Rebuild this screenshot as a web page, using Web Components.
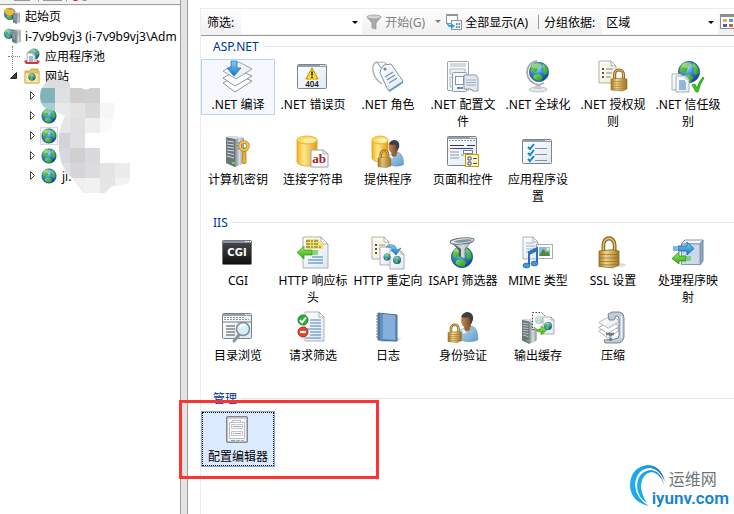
<!DOCTYPE html>
<html lang="zh-CN">
<head>
<meta charset="utf-8">
<title>IIS 管理器</title>
<style>
    body {
        margin: 0;
        background: #fff;
        color: #000;
        font: 12px/17px "Noto Sans", "Noto Sans CJK SC", sans-serif;
    }
</style>
</head>
<body>
<manager-window>
    <connection-tree slot="tree">
        <tree-node level="0" icon="start">起始页</tree-node>
        <tree-node level="0" icon="host">i-7v9b9vj3 (i-7v9b9vj3\Adm</tree-node>
        <tree-node level="1" icon="pools">应用程序池</tree-node>
        <tree-node level="1" icon="folder" state="open">网站</tree-node>
        <tree-node level="2" icon="site" state="closed"></tree-node>
        <tree-node level="2" icon="site" state="closed"></tree-node>
        <tree-node level="2" icon="site" state="closed" current></tree-node>
        <tree-node level="2" icon="site" state="closed"></tree-node>
        <tree-node level="2" icon="site" state="closed">ji.</tree-node>
    </connection-tree>

    <filter-toolbar slot="toolbar"></filter-toolbar>

    <feature-group label="ASP.NET">
        <feature-tile icon="compile" hot>.NET 编译</feature-tile>
        <feature-tile icon="error">.NET 错误页</feature-tile>
        <feature-tile icon="roles">.NET 角色</feature-tile>
        <feature-tile icon="profile">.NET 配置文件</feature-tile>
        <feature-tile icon="global">.NET 全球化</feature-tile>
        <feature-tile icon="rules">.NET 授权规则</feature-tile>
        <feature-tile icon="trust">.NET 信任级别</feature-tile>
        <feature-tile icon="machinekey">计算机密钥</feature-tile>
        <feature-tile icon="connection">连接字符串</feature-tile>
        <feature-tile icon="provider">提供程序</feature-tile>
        <feature-tile icon="controls">页面和控件</feature-tile>
        <feature-tile icon="settings">应用程序设置</feature-tile>
    </feature-group>

    <feature-group label="IIS">
        <feature-tile icon="cgi">CGI</feature-tile>
        <feature-tile icon="headers">HTTP 响应标头</feature-tile>
        <feature-tile icon="redirect">HTTP 重定向</feature-tile>
        <feature-tile icon="isapi">ISAPI 筛选器</feature-tile>
        <feature-tile icon="mime">MIME 类型</feature-tile>
        <feature-tile icon="ssl">SSL 设置</feature-tile>
        <feature-tile icon="handlers">处理程序映射</feature-tile>
        <feature-tile icon="browse">目录浏览</feature-tile>
        <feature-tile icon="filtering">请求筛选</feature-tile>
        <feature-tile icon="log">日志</feature-tile>
        <feature-tile icon="auth">身份验证</feature-tile>
        <feature-tile icon="cache">输出缓存</feature-tile>
        <feature-tile icon="compress">压缩</feature-tile>
    </feature-group>

    <feature-group label="管理" marked>
        <feature-tile icon="editor" selected>配置编辑器</feature-tile>
    </feature-group>

    <site-badge slot="badge"></site-badge>
</manager-window>

<script>
// Gradients shared by all of the icons
const DEFS = `
<defs>
    <radialGradient id="sea" cx=".4" cy=".3" r=".75"><stop offset="0" stop-color="#a9dcf8"/><stop offset=".45" stop-color="#3a86d4"/><stop offset="1" stop-color="#12358c"/></radialGradient>
    <linearGradient id="land" x2="1" y2="1"><stop offset="0" stop-color="#8be04a"/><stop offset="1" stop-color="#149a2c"/></linearGradient>
    <linearGradient id="gold"><stop offset="0" stop-color="#a87a24"/><stop offset=".35" stop-color="#f0d68a"/><stop offset="1" stop-color="#a27422"/></linearGradient>
    <linearGradient id="drum"><stop offset="0" stop-color="#f3b01c"/><stop offset=".35" stop-color="#ffe88c"/><stop offset="1" stop-color="#e39a12"/></linearGradient>
    <linearGradient id="paper" x2="1" y2="1"><stop offset="0" stop-color="#fff"/><stop offset="1" stop-color="#dfe9f2"/></linearGradient>
    <linearGradient id="cream" x2="1" y2="1"><stop offset="0" stop-color="#fffef4"/><stop offset="1" stop-color="#f3ecc8"/></linearGradient>
    <linearGradient id="steel"><stop offset="0" stop-color="#7f8990"/><stop offset=".5" stop-color="#d6dce0"/><stop offset="1" stop-color="#919aa1"/></linearGradient>
    <linearGradient id="blue" x2="0" y2="1"><stop offset="0" stop-color="#7fd0fa"/><stop offset="1" stop-color="#1676c4"/></linearGradient>
    <linearGradient id="green" x2="0" y2="1"><stop offset="0" stop-color="#9bea5c"/><stop offset="1" stop-color="#37a81c"/></linearGradient>
    <linearGradient id="shirt" x2="1" y2="1"><stop offset="0" stop-color="#b8dcf4"/><stop offset="1" stop-color="#5f9bcb"/></linearGradient>
    <linearGradient id="skin"><stop offset="0" stop-color="#c98b58"/><stop offset="1" stop-color="#6b4226"/></linearGradient>
    <linearGradient id="dark" x2="0" y2="1"><stop offset="0" stop-color="#4c4c4e"/><stop offset="1" stop-color="#0f0f10"/></linearGradient>
</defs>`;

const at = (x, y, s, body) => `<g transform="translate(${x} ${y}) scale(${s})">${body}</g>`;

const globe = (x, y, r) => at(x, y, r / 10, `
    <circle r="9.7" fill="url(#sea)" stroke="#1d4f96" stroke-width=".6"/>
    <path d="M-8 -4 Q-6 -9 -1 -9 L2 -7 L-1 -4 L-2 -1 L-5 1 L-8 0Z" fill="url(#land)"/>
    <path d="M4 -8 Q9 -5 9 1 L6 3 L4 0 L5 -3 L3 -5Z" fill="url(#land)"/>
    <path d="M-5 3 L0 2 L4 5 L2 9 Q-3 9 -6 6Z" fill="url(#land)"/>
    <ellipse cx="-2" cy="-6" rx="5" ry="2.5" fill="#fff" opacity=".3"/>`);

// 16 x 22 padlock
const lock = (x, y, s = 1) => at(x, y, s, `
    <path d="M3.5 11 V5.5 a4.5 4.5 0 0 1 9 0 V11" fill="none" stroke="#8a6318" stroke-width="3"/>
    <path d="M3.5 11 V5.5 a4.5 4.5 0 0 1 9 0 V11" fill="none" stroke="#e2c16c" stroke-width="1.2"/>
    <path d="M0 10 L11 9 L16 10 V20 L11 22 L0 21Z" fill="url(#gold)" stroke="#8f6a20" stroke-width=".6"/>
    <path d="M0 12.5h16M0 15h16M0 17.5h16M1 19.8h14" stroke="#8f6a20" stroke-width=".5"/>`);

const page = (x, y, w, h, fill = 'paper', fold = 5) => `
    <path d="M${x} ${y} h${w - fold} l${fold} ${fold} v${h - fold} h${-w}Z" fill="url(#${fill})" stroke="#a3a8ad" stroke-width=".9"/>
    <path d="M${x + w - fold} ${y} v${fold} h${fold}Z" fill="#fff" stroke="#9a9fa5" stroke-width=".8"/>`;

const frame = (x, y, w, h) => `
    <rect x="${x + .5}" y="${y + .5}" width="${w - 1}" height="${h - 1}" rx="1" fill="url(#paper)" stroke="#7b848c"/>
    <path d="M${x + 1} ${y + 2} h${w - 2}" stroke="#93a0ae" stroke-width="2"/>
    <path d="M${x + w - 7} ${y + 1.5} h1.5 m.8 0 h1.5 m.8 0 h1.5" stroke="#fff"/>`;

// 18 x 31 tower
const server = (x, y, s) => at(x, y, s, `
    <path d="M0 1 L8 0 L18 2 V27 L9 31 L0 27Z" fill="#9aa4aa"/>
    <path d="M0 1 L9 3 V31 L0 27Z" fill="#6b757c"/>
    <path d="M9 3 L18 2 V27 L9 31Z" fill="url(#steel)"/>
    <path d="M0 1 L8 0 L18 2 L9 3Z" fill="#dce2e5"/>
    <path d="M1 5l7 1M1 8l7 1M1 11l7 1M1 14l7 1M1 17l7 1.500M1 20l7 2" stroke="#d5dade"/>
    <path d="M10.500 7l6-.5M10.500 10l6-.6M10.500 13l6-.8" stroke="#78828a" stroke-width=".8"/>
    <rect x="6" y="26" width="3" height="2" fill="#54e327"/>`);

const drum = (x, y, w, h) => `
    <path d="M${x} ${y + 4} v${h - 8} a${w / 2} 4 0 0 0 ${w} 0 v${8 - h}Z" fill="url(#drum)" stroke="#d99a18" stroke-width=".7"/>
    <ellipse cx="${x + w / 2}" cy="${y + 4}" rx="${w / 2}" ry="4" fill="#ffd75a" stroke="#e8ab28" stroke-width=".8"/>
    <ellipse cx="${x + w / 2 + 2}" cy="${y + 4.5}" rx="${w / 3}" ry="2.3" fill="#fff0a8"/>`;

// 20 x 30 bust
const user = (x, y, s = 1) => at(x, y, s, `
    <path d="M1 27 Q0 18 6 16 L14 14 Q20 16 20 28 Q10 32 1 27Z" fill="url(#shirt)" stroke="#5d93bd" stroke-width=".6"/>
    <path d="M6 14 L13 13 L12 18 L7 20Z" fill="#9a633a"/>
    <path d="M4 16 L9 20 L5 22Z" fill="#eef7fd"/>
    <ellipse cx="8.500" cy="8.500" rx="5.500" ry="7" fill="url(#skin)"/>
    <path d="M3 5 Q5 0 10 0 Q16 1 15 8 L13 12 Q12 9 11 5 Q7 6 3 5Z" fill="#3b3f45"/>`);

const sheets = `
    <path d="M1 22 L16 14 L30 20 L13 31Z" fill="#fff" stroke="#8f9193"/>
    <path d="M1 17 L16 9 L30 15 L13 25Z" fill="#fff" stroke="#8f9193"/>
    <path d="M1 10 L17 1 L30 8 L14 18Z" fill="url(#paper)" stroke="#9fa2a5"/>`;

const ICONS = {
    compile: `${sheets}<path d="M9 0 h6 v7 h4 l-7 8 l-7-8 h4Z" fill="url(#blue)" stroke="#1467ac" stroke-width=".7"/>`,
    error: `${frame(0, 3, 30, 25)}
        <path d="M15 7 L21 18 H9Z" fill="#ffdf2c" stroke="#c99b08" stroke-width="1.200" stroke-linejoin="round"/>
        <path d="M15 10.500v4M15 15.500v1.500" stroke="#222" stroke-width="1.600"/>
        <text x="15" y="26" text-anchor="middle" font-family="Noto Sans" font-size="8" font-weight="600" fill="#222">404</text>`,
    roles: `<path d="M12 10 Q7 5 5 1 Q0 2 1 10 Q3 19 10 23" fill="none" stroke="#a9afb3" stroke-width="1.300"/>
        <path d="M5 2 Q12 -1 17 5" fill="none" stroke="#a9afb3"/>
        <path d="M9 8 L12 4 L19 3 L31 20 L30 22 L18 30 L16 29 L8 12Z" fill="url(#paper)" stroke="#8195a5"/>
        <path d="M17 30 L31 21" stroke="#5c9ac3" stroke-width="1.500"/>
        <circle cx="13" cy="8" r="1.600" fill="#6f8799"/>
        <path d="M13 16l8-5M15 19l8-5M17 22l8-5" stroke="#7590b1" stroke-width="1.200"/>`,
    profile: `<rect x=".5" y=".5" width="21" height="29" rx="1" fill="#fbfcfd" stroke="#9ba4ad"/>
        <path d="M3 3h16M3 5h16" stroke="#aeb5bd"/>
        <path d="M3 8h15v5H3zM3 16h4v10H3z" fill="#eef1f4" stroke="#b3bac4"/>
        <rect x="5.500" y="11.500" width="14" height="19" rx="1" fill="#f4f6f8" stroke="#929dab"/>
        <rect x="8.500" y="15.500" width="8" height="8" fill="#fff" stroke="#8193b5"/>
        <path d="M10 27h6" stroke="#7186aa" stroke-width="2"/>
        <path d="M17 14h12l2 3v13h-5l-2-2h-7z" fill="#e1e8f0" stroke="#8d9aa8"/>
        <path d="M19 19h10M19 21.500h10M19 24h10M24 28v2" stroke="#9dacc0"/>`,
    global: `<ellipse cx="16" cy="28.500" rx="9" ry="2.500" fill="#e5e8ea" stroke="#a7adb1" stroke-width=".7"/>
        <path d="M14 24h4l2 4h-8z" fill="#c6cbd0"/>
        <path d="M15 0 Q5 2 5 12 Q6 22 17 24 L22 22" fill="none" stroke="#a5abb0" stroke-width="1.800"/>${globe(17, 11, 10)}`,
    rules: `${page(2, 0, 17, 22, 'cream')}
        <path d="M5 8h2M5 12h2M5 16h2" stroke="#555" stroke-width="2"/>
        <path d="M9 8h7M9 12h6M9 16h5" stroke="#7c86b0"/>${lock(14, 8, 1)}`,
    trust: `${globe(17, 11, 11)}${page(0, 13, 12, 16, 'paper', 3)}${page(4, 15, 13, 16, 'paper', 3)}
        <path d="M7 20h6M7 22h7M7 24h7M7 26h7M7 28h7" stroke="#3a78bd" stroke-width="1.100"/>
        <path d="M20 24 L23 23 L25 27 Q27 20 31 16 L32 17 Q28 23 26 31 H24Z" fill="#37c81b" stroke="#1f8f10" stroke-width=".7"/>`,
    machinekey: `${server(4, 0, 1)}
        <path d="M21 12h3v15l-2 1-2-2v-2l1-1-1-2 1-1z" fill="#edb134" stroke="#a87514" stroke-width=".7"/>
        <circle cx="22" cy="10" r="4" fill="none" stroke="#b07a16" stroke-width="3.400"/>
        <circle cx="22" cy="10" r="4" fill="none" stroke="#f6c752" stroke-width="2"/>`,
    connection: `${drum(0, 0, 20, 30)}<path d="M14 14 H26 L31 18 V31 H14Z" fill="#fff" stroke="#9da3a8"/>
        <path d="M26 14v4h5z" fill="#e8ecef" stroke="#9da3a8" stroke-width=".7"/>
        <text x="22" y="27" text-anchor="middle" font-family="Liberation Serif" font-size="13" font-weight="700" fill="#a3221d">ab</text>`,
    provider: `${drum(0, 0, 16, 26)}${user(14, 4, .88)}${lock(6, 14, .8)}`,
    controls: `${frame(0, 0, 30, 30)}
        <path d="M2 4.500h26" stroke="#8d98a1" stroke-dasharray="2 1"/>
        <path d="M3 9.500h25" stroke="#383838" stroke-dasharray="14 3"/><path d="M4 12.500h22" stroke="#2348c9"/><path d="M3 12.500h4" stroke="#d93025"/>
        <path d="M3 16h9M3 19h9M3 22h9M14 19h3" stroke="#8d99a5"/><rect x="16.500" y="14.500" width="9" height="3" fill="#fff" stroke="#7a8591"/>
        <rect x="18.500" y="18.500" width="13" height="12" fill="#fff5b5" stroke="#bf9a13"/>
        <path d="M21 21h3v3h-3zM21 26h3v3h-3z" fill="#fff" stroke="#3a4ea5"/><path d="M26 22.500h4M26 27.500h4" stroke="#3a4ea5"/>`,
    settings: `${frame(0, 3, 30, 25)}
        <path d="M6 11l2 2 4-5M6 17l2 2 4-5M6 23l2 2 4-5" fill="none" stroke="#1585c9" stroke-width="2"/>
        <path d="M13 12.500h12M13 18.500h12M13 24.500h12" stroke="#8291a3"/>`,
    cgi: `<rect x=".5" y="3.500" width="29" height="24" rx="1" fill="url(#dark)" stroke="#77787a"/>
        <path d="M1 5h28" stroke="#8795a5" stroke-width="2"/><path d="M23 4.500h1.500m1 0h1.500m1 0h1" stroke="#fff"/>
        <text x="15" y="19" text-anchor="middle" font-family="DejaVu Sans" font-size="10" font-weight="700" fill="#fff">CGI</text>`,
    headers: `${page(6, 0, 25, 31, 'paper', 7)}
        <path d="M9 2h13v3h4v7H9z" fill="#f6e36a"/>
        <path d="M9 4h13M9 7h13M9 10h16" stroke="#655b28" stroke-dasharray="4 1 2 1"/>
        <path d="M0 15.500 L7 9 V13 H15 V18 H7 V22Z" fill="url(#green)" stroke="#2b9a19" stroke-width=".7"/>
        <path d="M16 13v5M18 13v5M20 13v5" stroke="#57c53a" stroke-width="1.300"/>
        <path d="M15 20h11M11 23h15M11 26h15" stroke="#3c7cc0" stroke-width="1.200"/>`,
    redirect: `${page(0, 0, 17, 22, 'cream')}
        <path d="M3 8h2M3 12h2M3 16h2" stroke="#555" stroke-width="2"/><path d="M7 8h6M7 12h3" stroke="#99936e"/>
        ${page(8, 10, 13, 18, 'paper', 3)}${page(18, 14, 14, 18, 'paper', 3)}${globe(15, 20, 3.5)}${globe(25, 23, 4)}
        <path d="M14 10 Q18 6 23 9 L25 13 L29 11 L24 18 L19 13 L22 13 Q19 9 14 10Z" fill="url(#blue)" stroke="#1771ad" stroke-width=".6"/>`,
    isapi: `${globe(15, 20, 11)}
        <path d="M3 4 L12 13 V19 L18 22 V12 L27 2Z" fill="url(#steel)" stroke="#58646d" stroke-width=".6"/>
        <path d="M5 6 L12 13 V19 L14 20 V12Z" fill="#4f5d68"/>
        <ellipse cx="15" cy="4" rx="12" ry="3" fill="#e7edf1" stroke="#6c7982" transform="rotate(-6 15 4)"/>
        <ellipse cx="16" cy="4" rx="9" ry="1.500" fill="#7f929e" transform="rotate(-6 15 4)"/>`,
    mime: `${page(1, 0, 15, 22)}<path d="M4 6h7M4 9h9M4 12h8M4 15h7" stroke="#9eb0c4"/>
        <rect x="14.500" y="7.500" width="16" height="14" fill="#fff" stroke="#a9adb0"/>
        <rect x="17" y="10" width="11" height="9" fill="#7dc0ed"/><path d="M17 19l4-7 3 4 2-2 2 5z" fill="#36963b"/><path d="M21 19l1-7 2 4z" fill="#d64a2f"/><circle cx="26" cy="12" r="1.500" fill="#fff36e"/>
        <path d="M7 28 V15 L15 11 V26 M7 17l8-4" fill="none" stroke="#2d6fb9" stroke-width="2"/>
        <ellipse cx="4.500" cy="28.500" rx="3.500" ry="2.500" fill="#4d95db" stroke="#225d9e" stroke-width=".7"/><ellipse cx="12.500" cy="26.500" rx="3.500" ry="2.500" fill="#4d95db" stroke="#225d9e" stroke-width=".7"/>`,
    ssl: `<ellipse cx="21" cy="28" rx="8" ry="2" fill="#ddd"/>${at(2, 0, 1, `<g transform="scale(1.250 1.400)">${lock(0, 0)}</g>`)}`,
    handlers: `<path d="M9 7 L13 3 H31 L28 7Z" fill="#f3f7fb" stroke="#8397ad"/><path d="M28 7 L31 3 V24 L28 28Z" fill="#8fa9c6" stroke="#6f88a5"/>
        <rect x="9.500" y="7" width="18.500" height="20.500" fill="#cbdaea" stroke="#8397ad"/>
        <path d="M2 9v5M4 9v5" stroke="#2489d0" stroke-width="1.200"/><path d="M6 9 H15 V5 L22 11.500 L15 18 V14 H6Z" fill="url(#blue)" stroke="#1463a0" stroke-width=".8"/>
        <path d="M0 21.500 L7 15 V19 H14 V24 H7 V27Z" fill="url(#green)" stroke="#2b9119" stroke-width=".8"/><path d="M16 19v5M18 19v5" stroke="#54ca35" stroke-width="1.200"/>`,
    browse: `${frame(0, 1, 30, 26)}<path d="M2 5.500h20M2 7.500h25" stroke="#8e989f" stroke-dasharray="2 1"/><path d="M1 10h28" stroke="#737b82"/>
        <path d="M4 14h9M4 17h9M4 20h9M4 23h9" stroke="#4a4d50" stroke-width="1.200"/>
        <path d="M17 23 L12 29" stroke="#8b949a" stroke-width="3" stroke-linecap="round"/>
        <circle cx="21" cy="17" r="6.500" fill="#d6edfa" stroke="#818d95" stroke-width="1.500"/><path d="M17 16 Q19 12 24 13" fill="none" stroke="#fff" stroke-width="2"/>`,
    filtering: `${page(8, 0, 19, 29)}<path d="M13 8h11M13 11h11M13 14h11M9 17h15M13 20h11M13 23h11M9 26h15" stroke="#4d7fb5"/>
        <circle cx="6" cy="8" r="5" fill="#36ad3e" stroke="#1f7f2b"/><path d="M3 8l2 2.500 4-5" fill="none" stroke="#fff" stroke-width="2"/>
        <circle cx="6" cy="20" r="5" fill="#e8432a" stroke="#b52a18"/><path d="M3 20h6" stroke="#fff" stroke-width="2.200"/>`,
    log: `<path d="M10 28 L30 26 L24 30 H8Z" fill="#d8d8d8"/><path d="M6 1 L25 3 V29 L6 28Z" fill="#5f8fc4" stroke="#446c99"/>
        <path d="M11 2 L23 3.500 V28 L11 27Z" fill="#86afdb"/><path d="M7 2v25" stroke="#3b5f8a"/>
        <path d="M4 4h4M4 7h4M4 10h4M4 13h4M4 16h4M4 19h4M4 22h4M4 25h4" stroke="#757f88" stroke-width="1.200"/>`,
    auth: `${user(11, 0, 1)}${lock(1, 12, .84)}`,
    cache: `${server(0, 7, .8)}<path d="M10.500 .5h9l4 4v13h-13z" fill="#fff" stroke="#444" stroke-dasharray="1.500 1.500"/>
        ${at(17, 8, 1, `<g opacity=".35">${globe(0, 0, 4)}</g>`)}${page(21, 5, 11, 17, 'paper', 3)}${globe(26, 14, 4)}
        <path d="M12 15 Q15 19 19 17 V14 L25 18 L19 23 V20 Q13 20 12 15Z" fill="url(#green)" stroke="#2b9a19" stroke-width=".6"/>`,
    compress: `${at(1, 3, .74, sheets)}<path d="M11 2 L15 0 H23 Q27 1 27 6 V25 Q26 31 20 31 H8 L7 28 L18 27 Q22 27 22 23 V7 Q22 4 19 4 L17 8 H12Z" fill="#bfcbd6" stroke="#5f6f7e" stroke-width=".8"/>
        <path d="M24.500 4V26" stroke="#eef3f7" stroke-width="1.500"/>
        <path d="M13.500 21v8M9 22h8" stroke="#6c7c89" stroke-width="2.500"/><path d="M12 25h3" stroke="#eef3f6"/>`,
    editor: `<rect x="4.750" y="3.750" width="20.500" height="25.500" rx="1" fill="#f3f4f5" stroke="#858789" stroke-width="1.500"/>
        <path d="M6 5.500h18" stroke="#cfd1d3"/>
        <path d="M7.500 9.500h3v-2h8v2h4v16h-15z" fill="#fff" stroke="#babcbe"/><path d="M11 9.500h7" stroke="#babcbe"/>
        <path d="M9.500 11.500h11v4h-11zM9.500 18.500h11v4h-11z" fill="#fff" stroke="#c3c7c9"/>
        <path d="M11 13.500h8M13 20.500h6" stroke="#9fa5a9"/>
        <path d="M11 20.500h1" stroke="#25b4df"/><path d="M9 27.500h4" stroke="#26c4ec"/><path d="M14 27.500h4M19 27.500h3" stroke="#aaa"/>`,

    // 16 px icons
    start: `${globe(6, 6, 6)}<path d="M0 3l3-3 3 2 3-1 2 4-5 3-3-1z" fill="#f4bd28" stroke="#c78f13" stroke-width=".5"/>${server(9, 4, .38)}`,
    host: `${globe(5, 6, 5)}${server(8, 1, .47)}`,
    pools: `${page(4, 4, 9, 11, 'paper', 3)}${globe(10, 6, 5.5)}${page(3, 5, 8, 10, 'paper', 2)}<path d="M5 9h4M5 11h4M5 13h4" stroke="#4a86c5"/>
        <path d="M0 13l3-1v2h10v-2l3 1-2 3H2z" fill="#d33a35"/>`,
    folder: `<path d="M1 3h5l1-2h7v2h1v12H1z" fill="#ecc463" stroke="#c0973d" stroke-width=".8"/><path d="M1 5h14v10H1z" fill="#fae39a" stroke="#cfa549" stroke-width=".6"/>${globe(8, 9, 3.6)}`,
    site: globe(8, 8, 7.5),
    funnel: `<path d="M1 3 L6 9 V14 L10 15 V9 L15 3Z" fill="#aaa" stroke="#929292" stroke-width=".7"/><ellipse cx="8" cy="3" rx="7" ry="2" fill="#d5d5d5" stroke="#929292" stroke-width=".7"/>`,
    showall: `<rect x=".5" y=".5" width="11" height="9" fill="#fff" stroke="#8e959d"/><path d="M1 1.500h10" stroke="#8e959d"/>
        <rect x="5.500" y="6.500" width="10" height="9" fill="#f5f7f9" stroke="#8e959d"/><path d="M10 10h1.500m1 0h1.500M10 13h1.500m1 0h1.500" stroke="#475f9c" stroke-width="1.500"/>
        <path d="M1 7 Q1 11 5 11 V9 L9 12 L5 15 V13 Q0 13 1 7Z" fill="#2c9ee0"/>`,
    view: `<rect x=".5" y=".5" width="15" height="14" fill="#fff" stroke="#888e94"/><path d="M1 2h14" stroke="#888e94" stroke-width="2"/>
        <rect x="3" y="5" width="4" height="3" fill="#d9b350"/><rect x="9" y="5" width="4" height="3" fill="#5f9bc9"/><rect x="3" y="10" width="4" height="3" fill="#5a59ad"/><rect x="9" y="10" width="4" height="3" fill="#cb6048"/>`,
};

class AppIcon extends HTMLElement {
    constructor() {
        super();
        this.attachShadow({ mode: 'open' });
    }

    connectedCallback() {
        const size = Number(this.getAttribute('size') || 32);
        this.shadowRoot.innerHTML = `
        <style>
            :host {
                display: block;
                flex: none;
                width: ${size}px;
                height: ${size}px;
            }

            svg {
                display: block;
                overflow: visible;
            }
        </style>
        <svg width="${size}" height="${size}" viewBox="0 0 ${size} ${size}" aria-hidden="true">${DEFS}${ICONS[this.getAttribute('name')]}</svg>
        `;
    }
}

class ManagerWindow extends HTMLElement {
    constructor() {
        super();
        this.attachShadow({ mode: 'open' });

        this.shadowRoot.innerHTML = `
        <style>
            :host {
                display: grid;
                grid-template-columns: 180px 8px minmax(0, 1fr);
                height: 100vh;
                position: relative;
                overflow: hidden;
            }

            .splitter {
                box-sizing: border-box;
                background: #e3e3e3;
                border: solid #a0a0a0;
                border-width: 0 1px;
            }

            main {
                display: flex;
                margin-left: 12px;
                padding-top: 8px;
            }

            .content {
                flex: 1;
                min-width: 0;
                border-left: 1px solid #ececec;
            }
        </style>

        <slot name="tree"></slot>
        <div class="splitter"></div>
        <main>
            <div class="content">
                <slot name="toolbar"></slot>
                <slot></slot>
            </div>
        </main>
        <slot name="badge"></slot>
        `;
    }
}

class ConnectionTree extends HTMLElement {
    constructor() {
        super();
        this.attachShadow({ mode: 'open' });

        this.shadowRoot.innerHTML = `
        <style>
            :host {
                display: block;
                position: relative;
                overflow: hidden;
            }

            .strip {
                box-sizing: border-box;
                height: 6px;
                border-bottom: 1px solid #f4f4f4;
            }

            .strip svg,
            .smudge {
                display: block;
            }

            .guide,
            .smudge {
                position: absolute;
                pointer-events: none;
            }

            .guide {
                left: 12px;
                top: 46px;
                height: 24px;
                border-left: 1px dotted #808080;
            }

            .smudge {
                left: 40px;
                top: 79px;
            }
        </style>

        <div class="strip">
            <svg width="180" height="5" aria-hidden="true">
                <path d="M0 0h180v4H0z" fill="#f2f2f2"/>
                <path d="M0 4.500h180" stroke="#a0a0a0"/>
                <path d="M14 0h16v1H14zM43 0h19v1H43z" fill="#999"/>
                <path d="M38.500 0v2M66.500 0v2" stroke="#aaa"/>
                <path d="M73 0h5l-1 1h-3z" fill="#cf3227"/>
                <path d="M82 0h5l-1 1h-3z" fill="#74a3c8"/>
            </svg>
        </div>
        <slot></slot>
        <div class="guide"></div>
        <svg class="smudge" width="90" height="115" viewBox="40 79 90 115" aria-hidden="true">
            <clipPath id="blob">
                <path d="M40 96 Q40 86 49 80 H63 L70 83 V88 H82 Q86 91 90 88 H100 V103 H115 L111 131 L100 133 H85 V148 H100 V163 H130 V182 Q124 186 112 186 L105 193 H83 L72 178 Q61 170 59 151 Q57 130 65 116 L55 111 Q40 110 40 96Z"/>
            </clipPath>
            <g id="cells" clip-path="url(#blob)" shape-rendering="crispEdges"></g>
        </svg>
        `;

        // One row per 15 px band, starting at the given x
        const rows = [
            [40, '#dcdce0', '#dcdde1', '#dcdce0'],
            [40, '#80b4b9', '#dfe1e3', '#d1cfce', '#d0d0d2'],
            [40, '#a9cdd2', '#e6e8ea', '#e5e3e1', '#dadad9', '#f6f6f9'],
            [55, '#e6e6e6', '#e0e0e2', '#eeeeec', '#fafafa'],
            [55, '#d3d4d9', '#e0e0e1'],
            [55, '#d6d8de', '#d0d0d2', '#dadadd'],
            [55, '#dfdfe3', '#d7d5d7', '#dcdce0', '#e5e4e4', '#ebecee'],
            [70, '#efeff0', '#f1f1f1', '#e5e5e3', '#f0f2f5'],
        ];
        this.shadowRoot.querySelector('#cells').innerHTML = rows.map(([x, ...fills], row) =>
            fills.map((fill, col) => `<rect x="${x + col * 15}" y="${73 + row * 15}" width="15" height="15" fill="${fill}"/>`).join('')
        ).join('');
    }
}

class TreeNode extends HTMLElement {
    constructor() {
        super();
        this.attachShadow({ mode: 'open' });
    }

    connectedCallback() {
        const state = this.getAttribute('state');
        const arrow = state === 'open'
            ? '<path d="M8.500 2.500v6h-6z" fill="#444" stroke="#222"/>'
            : '<path d="M5.500 1.500l4 4-4 4z" fill="#fff" stroke="#444"/>';
        const toggle = state
            ? `<button aria-label="${this.textContent || '站点'}" aria-expanded="${state === 'open'}"><svg width="12" height="12">${arrow}</svg></button>`
            : '<span class="dots"></span>';

        this.shadowRoot.innerHTML = `
        <style>
            :host {
                display: flex;
                align-items: center;
                height: 20px;
                white-space: nowrap;
            }

            :host([level="0"]) { padding-left: 4px; }
            :host([level="1"]) { padding-left: 8px; }
            :host([level="2"]) { padding-left: 25px; }

            button {
                display: block;
                width: 12px;
                height: 12px;
                margin-right: 4px;
                padding: 0;
                border: 0;
                background: none;
            }

            button svg {
                display: block;
            }

            .dots {
                width: 12px;
                margin-right: 4px;
                border-top: 1px dotted #808080;
            }

            :host([level="0"]) .dots {
                display: none;
            }

            :host([current]) app-icon {
                background: #f5f5f5;
                outline: 1px solid #d9d9d9;
            }

            .text {
                margin-left: 5px;
            }
        </style>

        ${toggle}
        <app-icon name="${this.getAttribute('icon')}" size="16"></app-icon>
        <span class="text"><slot></slot></span>
        `;
    }
}

class FilterToolbar extends HTMLElement {
    constructor() {
        super();
        this.attachShadow({ mode: 'open' });

        this.shadowRoot.innerHTML = `
        <style>
            :host {
                display: flex;
                align-items: center;
                box-sizing: border-box;
                height: 28px;
                padding-left: 6px;
                border-top: 1px solid #ececec;
                border-bottom: 1px solid #999;
                background: linear-gradient(#fdfdfd, #f0f0f0);
                overflow: hidden;
                white-space: nowrap;
            }

            label {
                flex: none;
            }

            .combo {
                position: relative;
                flex: none;
                height: 24px;
                margin-left: 7px;
                background: #fff;
            }

            .combo svg {
                position: absolute;
                right: 4px;
                top: 11px;
                pointer-events: none;
            }

            input,
            select {
                appearance: none;
                box-sizing: border-box;
                width: 100%;
                height: 24px;
                padding: 0 4px;
                border: 0;
                background: none;
                color: inherit;
                font: inherit;
            }

            .filter { width: 121px; }
            .group { width: 116px; }

            button {
                display: flex;
                flex: none;
                align-items: center;
                gap: 3px;
                padding: 0;
                border: 0;
                background: none;
                color: inherit;
                font: inherit;
            }

            button:disabled {
                color: #808080;
            }

            .go { margin: 0 10px 0 4px; }
            .more { margin-right: 5px; }

            .divider {
                flex: none;
                width: 1px;
                height: 14px;
                margin: 0 5px 0 10px;
                background: #999;
            }

            .view {
                margin-left: 2px;
            }
        </style>

        <label for="filter">筛选:</label>
        <div class="combo filter">
            <input id="filter" type="text">
            <svg width="6" height="4"><path d="M0 0h6l-3 3z"/></svg>
        </div>
        <button class="go" disabled><app-icon name="funnel" size="16"></app-icon>开始(G)</button>
        <button class="more" disabled aria-label="开始选项"><svg width="6" height="4"><path d="M0 0h6l-3 3z" fill="#808080"/></svg></button>
        <button><app-icon name="showall" size="16"></app-icon>全部显示(A)</button>
        <span class="divider"></span>
        <label for="group">分组依据:</label>
        <div class="combo group">
            <select id="group"><option>区域</option></select>
            <svg width="6" height="4"><path d="M0 0h6l-3 3z"/></svg>
        </div>
        <button class="view" aria-label="视图"><app-icon name="view" size="16"></app-icon></button>
        `;
    }
}

class FeatureGroup extends HTMLElement {
    constructor() {
        super();
        this.attachShadow({ mode: 'open' });
    }

    connectedCallback() {
        this.shadowRoot.innerHTML = `
        <style>
            :host {
                display: block;
                position: relative;
                margin-bottom: 3px;
            }

            h2 {
                display: flex;
                align-items: center;
                gap: 4px;
                height: 21px;
                margin: 0 0 2px;
                padding-left: 12px;
                color: #003399;
                font: inherit;
            }

            h2::after {
                content: "";
                flex: 1;
                height: 1px;
                background: #d9e6f4;
            }

            .tiles {
                display: grid;
                grid-template-columns: repeat(auto-fill, 74px);
                grid-auto-rows: minmax(75px, auto);
                column-gap: 1px;
                align-items: start;
            }

            .mark {
                display: none;
            }

            :host([marked]) .mark {
                display: block;
                position: absolute;
                box-sizing: border-box;
                left: -22px;
                top: 12px;
                width: 200px;
                height: 79px;
                border: 3px solid #fb3434;
                pointer-events: none;
            }
        </style>

        <h2>${this.getAttribute('label')}</h2>
        <div class="tiles"><slot></slot></div>
        <div class="mark"></div>
        `;
    }
}

class FeatureTile extends HTMLElement {
    constructor() {
        super();
        this.attachShadow({ mode: 'open' });
    }

    connectedCallback() {
        this.shadowRoot.innerHTML = `
        <style>
            :host {
                display: block;
            }

            button {
                display: flex;
                flex-direction: column;
                align-items: center;
                gap: 3px;
                box-sizing: border-box;
                width: 100%;
                min-height: 56px;
                padding: 1px;
                border: 1px solid transparent;
                background: none;
                color: inherit;
                font: inherit;
                text-align: center;
            }

            :host([hot]) button {
                border-color: #b8d3f9;
                background: #f5f9ff;
            }

            :host([selected]) button {
                border-color: #7da7e0;
                background: #dbeaff;
                outline: 1px dotted #000;
                outline-offset: -2px;
            }
        </style>

        <button>
            <app-icon name="${this.getAttribute('icon')}"></app-icon>
            <span><slot></slot></span>
        </button>
        `;
    }
}

class SiteBadge extends HTMLElement {
    constructor() {
        super();
        this.attachShadow({ mode: 'open' });

        this.shadowRoot.innerHTML = `
        <style>
            :host {
                display: grid;
                position: absolute;
                right: 5px;
                bottom: 6px;
            }

            svg,
            .text {
                grid-area: 1 / 1;
            }

            .text {
                align-self: end;
                padding-left: 23px;
                color: #1583d2;
                font: 600 17px/20px Roboto, sans-serif;
            }

            .name {
                display: block;
                padding-left: 17px;
                color: #6d7378;
                font: 16px/20px "Noto Sans CJK SC", sans-serif;
            }
        </style>

        <svg width="38" height="44" aria-hidden="true">
            <linearGradient id="ring"><stop offset="0" stop-color="#1cb0f2"/><stop offset=".6" stop-color="#1c97dc"/><stop offset="1" stop-color="#155f9f"/></linearGradient>
            <path d="M36 18 Q32 1 18 1 Q1 4 1 22 Q2 38 20 42 Q7 35 6 21 Q7 6 20 4 Q30 4 36 18Z" fill="url(#ring)"/>
            <path d="M35 20 Q31 6 21 6 Q9 8 8 21 Q8 33 18 39 Q12 30 12 21 Q13 10 22 8 Q30 8 35 20Z" fill="url(#ring)"/>
        </svg>
        <div class="text"><span class="name">运维网</span>iyunv.com</div>
        `;
    }
}

customElements.define('app-icon', AppIcon);
customElements.define('manager-window', ManagerWindow);
customElements.define('connection-tree', ConnectionTree);
customElements.define('tree-node', TreeNode);
customElements.define('filter-toolbar', FilterToolbar);
customElements.define('feature-group', FeatureGroup);
customElements.define('feature-tile', FeatureTile);
customElements.define('site-badge', SiteBadge);
</script>
</body>
</html>
